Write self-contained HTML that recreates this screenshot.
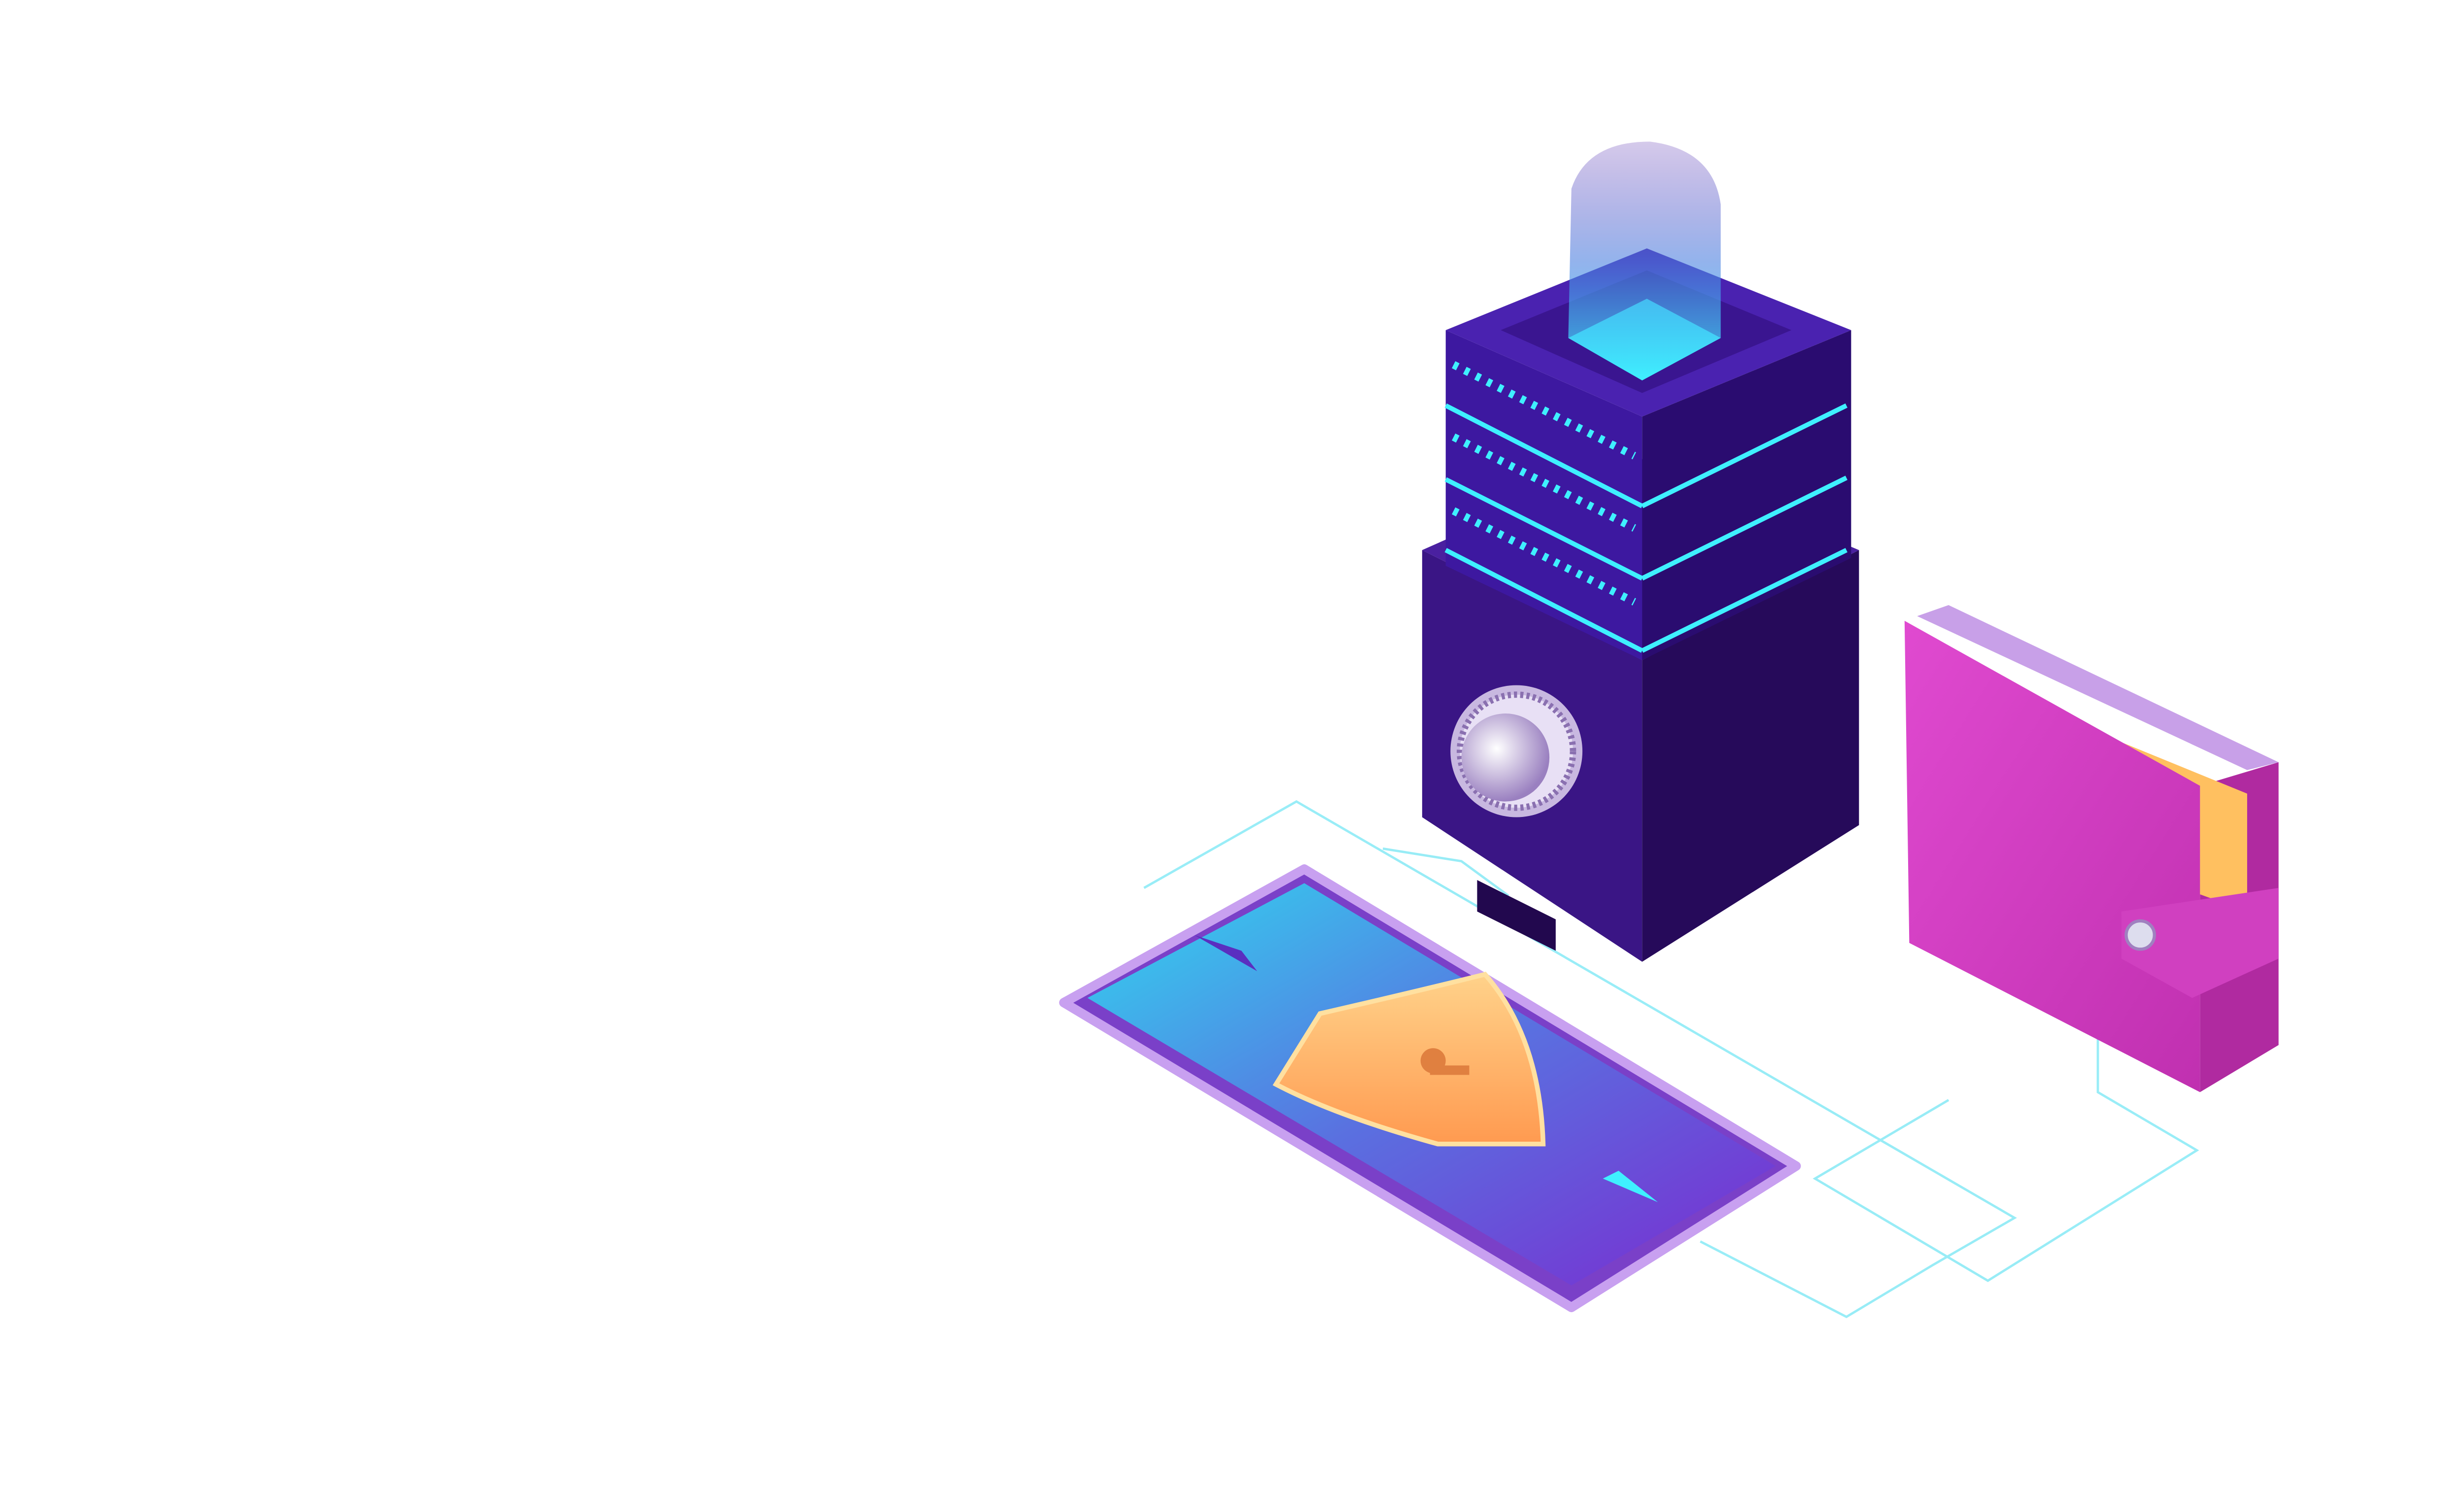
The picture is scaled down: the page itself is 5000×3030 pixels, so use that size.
<!DOCTYPE html>
<html><head><meta charset="utf-8"><style>html,body{margin:0;padding:0;background:#fff;width:5000px;height:3030px;overflow:hidden}svg{display:block}</style></head>
<body>
<svg width="5000" height="3030" viewBox="0 0 1568 950" xmlns="http://www.w3.org/2000/svg">
<defs>
<linearGradient id="beam" x1="0" y1="0" x2="0" y2="1"><stop offset="0" stop-color="#5a2fb0" stop-opacity="0.3"/><stop offset="0.5" stop-color="#4a7fe0" stop-opacity="0.7"/><stop offset="1" stop-color="#3ff0ff"/></linearGradient>
<linearGradient id="screen" x1="0" y1="0" x2="1" y2="1"><stop offset="0" stop-color="#30d8f0"/><stop offset="0.5" stop-color="#5a70e0"/><stop offset="1" stop-color="#7a2ad0"/></linearGradient>
<linearGradient id="pink" x1="0" y1="0" x2="1" y2="1"><stop offset="0" stop-color="#e04ad0"/><stop offset="1" stop-color="#c030b0"/></linearGradient>
<radialGradient id="dial" cx="0.4" cy="0.4" r="0.6"><stop offset="0" stop-color="#fff"/><stop offset="1" stop-color="#9a80c0"/></radialGradient>
<linearGradient id="shield" x1="0" y1="0" x2="0" y2="1"><stop offset="0" stop-color="#ffd28a"/><stop offset="1" stop-color="#ff9a50"/></linearGradient>
</defs>
<rect width="1568" height="950" fill="#fff"/>
<g fill="none" stroke="#7fe8f5" stroke-width="1.5" opacity="0.8">
<polyline points="728,565 825,510 1282,775 1230,805 1175,838 1082,790"/>
<polyline points="1335,600 1335,695 1398,732 1265,815 1155,750 1240,700"/>
<polyline points="960,570 930,548 880,540"/>
</g>
<polygon points="905,350 1045,420 1045,612 905,520" fill="#3a1585"/>
<polygon points="1045,420 1183,350 1183,525 1045,612" fill="#260a5a"/>
<polygon points="905,350 1040,290 1183,350 1045,420" fill="#4a20a0"/>
<polygon points="940,560 990,585 990,605 940,580" fill="#22084e"/>
<circle cx="965" cy="478" r="42" fill="#c8b8e0"/>
<circle cx="965" cy="478" r="36" fill="#e8e0f5" stroke="#8a70b0" stroke-width="4" stroke-dasharray="2 2"/>
<circle cx="958" cy="482" r="28" fill="url(#dial)"/>
<polygon points="920,210 1045,265 1045,420 920,360" fill="#3d18a0"/>
<polygon points="1045,265 1178,210 1178,355 1045,420" fill="#2a0c70"/>
<g stroke="#3ff0ff" stroke-width="3">
<line x1="1045" y1="322" x2="1175" y2="258"/>
<line x1="1045" y1="368" x2="1175" y2="304"/>
<line x1="1045" y1="414" x2="1175" y2="350"/>
<line x1="920" y1="258" x2="1045" y2="322"/>
<line x1="920" y1="305" x2="1045" y2="368"/>
<line x1="920" y1="350" x2="1045" y2="414"/>
</g>
<g stroke="#3ff0ff" stroke-width="5" stroke-dasharray="3 5">
<path d="M925,232 L1040,290"/>
<path d="M925,278 L1040,336"/>
<path d="M925,325 L1040,383"/>
</g>
<polygon points="920,210 1048,158 1178,210 1045,265" fill="#4a22b0"/>
<polygon points="955,210 1048,172 1140,210 1045,250" fill="#3a1590"/>
<polygon points="998,215 1048,190 1095,215 1045,242" fill="#3ff0ff"/>
<path d="M1000,120 Q1010,90 1050,90 Q1090,95 1095,130 L1095,215 L1045,242 L998,215 Z" fill="url(#beam)" opacity="0.85"/>
<polygon points="1400,500 1450,485 1450,665 1400,695" fill="#b02aa0"/>
<polygon points="1220,392 1430,490 1450,485 1240,385" fill="#c8a0e8"/>
<polygon points="1320,460 1430,505 1430,580 1320,540" fill="#ffc060"/>
<polygon points="1212,395 1400,500 1400,695 1215,600" fill="url(#pink)"/>
<polygon points="1350,580 1450,565 1450,610 1395,635 1350,610" fill="#d040c0"/>
<circle cx="1362" cy="595" r="9" fill="#dde" stroke="#a080c0" stroke-width="2"/>
<polygon points="830,553 1143,742 1000,832 677,638" fill="#7a40c8" stroke="#c8a0f0" stroke-width="6" stroke-linejoin="round"/>
<polygon points="830,562 1130,742 1000,818 692,635" fill="url(#screen)" stroke-linejoin="round"/>
<polygon points="760,595 790,605 800,618" fill="#5a2fc0"/>
<polygon points="1055,765 1020,750 1030,745" fill="#3ff0ff"/>
<path d="M812,690 L840,645 Q905,630 945,620 Q980,660 982,728 L915,728 Q850,710 812,690 Z" fill="url(#shield)" stroke="#ffe0a0" stroke-width="3"/>
<circle cx="912" cy="675" r="8" fill="#e08040"/>
<rect x="910" y="678" width="25" height="6" fill="#e08040"/>
</svg>
</body></html>
